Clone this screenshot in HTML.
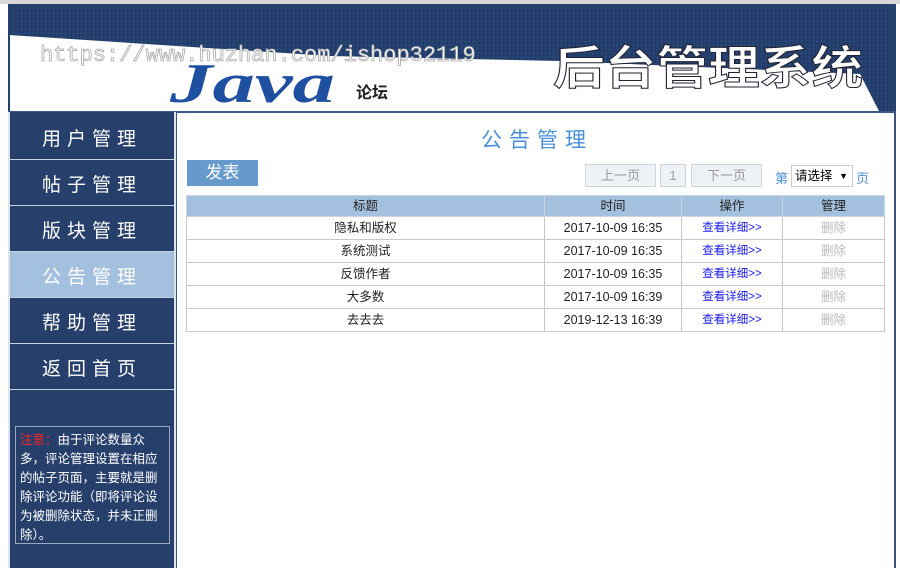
<!DOCTYPE html>
<html><head><meta charset="utf-8"><style>
*{margin:0;padding:0;box-sizing:border-box}
body{width:900px;height:568px;overflow:hidden;background:#fff;font-family:"Liberation Sans","Noto Sans CJK SC",sans-serif;position:relative}
.hdr{position:absolute;left:0;top:0;width:900px;height:113px;border-top:4px solid #d8d8d8}
.side{position:absolute;left:8px;top:112px;width:168px;height:456px;background:#263f6b;border-left:2px solid #dfe4ec;border-right:2px solid #dfe4ec;padding-top:2px}
.mi{height:46px;border-bottom:1px solid #c9d3e0;color:#fff;font-size:19px;letter-spacing:6px;text-align:center;line-height:52px}
.mi.on{background:#a3c0de}
.note{position:absolute;left:5px;top:314px;width:155px;height:118px;border:1px solid #9aa8bd;color:#fff;font-size:12.5px;line-height:19px;padding:4px 4px}
.main{position:absolute;left:176px;top:112px;width:720px;height:456px;border-left:1px solid #3b5585;border-right:2px solid #3b5585;border-top:1px solid #3b5585}
h1{position:absolute;left:0;width:720px;top:11px;text-align:center;font-weight:normal;color:#4a90d9;font-size:21px;letter-spacing:7px}
.pub{position:absolute;left:10px;top:47px;width:71px;height:26px;background:#6699cc;color:#fff;font-size:17px;line-height:26px;text-align:center}
.pb{position:absolute;top:51px;height:23px;border:1px solid #cdd5de;background:#eef2f7;color:#999;font-size:13px;text-align:center;line-height:21px}
table{position:absolute;left:9px;top:82px;width:699px;border-collapse:collapse;font-size:12.5px}
td,th{border:1px solid #c8c8c8;height:23px;text-align:center;font-weight:normal;color:#222;line-height:14px}
th{background:#a3c0de;height:21px;border-color:#c9d5e2}
.l{color:#1a1aee;font-size:11.5px}.d{color:#bbb}
</style></head><body>
<div class="hdr">
<svg width="900" height="109" style="position:absolute;left:0;top:0">
<defs><pattern id="n" width="4" height="4" patternUnits="userSpaceOnUse"><rect width="4" height="4" fill="#24406e"/><rect x="1" y="1" width="1" height="1" fill="#3a5688"/><rect x="3" y="2" width="1" height="1" fill="#1a3058"/></pattern></defs>
<rect x="0" y="0" width="900" height="109" fill="#fff"/>
<rect x="8" y="0" width="888" height="109" fill="url(#n)"/>
<polygon points="9,31 330,52 560,57 860,70 880,109 9,109" fill="#fff"/>
<rect x="8" y="0" width="2" height="109" fill="#24406e"/><rect x="894" y="0" width="2" height="109" fill="#24406e"/>
<rect x="8" y="107" width="888" height="2" fill="#3b5585"/>
<text x="40" y="57" font-family="Liberation Mono,monospace" font-size="22" fill="#fff" stroke="#aaa" stroke-width="0.8">https://www.huzhan.com/ishop32119</text>
<text x="170" y="98" font-family="Liberation Serif,serif" font-style="italic" font-weight="bold" font-size="56" fill="#1f4fa0" textLength="165" lengthAdjust="spacingAndGlyphs">Java</text>
<text x="356" y="94" font-family="Noto Sans CJK SC,sans-serif" font-weight="bold" font-size="16" fill="#222">论坛</text>
<text x="553" y="80" font-family="Noto Sans CJK SC,sans-serif" font-weight="bold" font-size="46" fill="#fff" stroke="#223" stroke-width="1" textLength="310" lengthAdjust="spacingAndGlyphs">后台管理系统</text>
</svg></div>
<div class="side">
<div class="mi">用户管理</div><div class="mi">帖子管理</div><div class="mi">版块管理</div><div class="mi on">公告管理</div><div class="mi">帮助管理</div><div class="mi">返回首页</div>
<div class="note"><span style="color:#f22">注意：</span>由于评论数量众多，评论管理设置在相应的帖子页面，主要就是删除评论功能（即将评论设为被删除状态，并未正删除）。</div>
</div>
<div class="main">
<h1>公告管理</h1>
<div class="pub">发表</div>
<div class="pb" style="left:408px;width:71px">上一页</div>
<div class="pb" style="left:483px;width:26px">1</div>
<div class="pb" style="left:514px;width:71px">下一页</div>
<span style="position:absolute;left:598px;top:55px;color:#4a90d9;font-size:13px">第</span>
<div style="position:absolute;left:614px;top:52px;width:62px;height:22px;border:1px solid #ccc;font-size:12.5px;line-height:20px;padding-left:3px">请选择 <span style="position:absolute;right:4px;font-size:9px">▼</span></div>
<span style="position:absolute;left:679px;top:55px;color:#4a90d9;font-size:13px">页</span>
<table>
<tr><th style="width:358px">标题</th><th style="width:137px">时间</th><th style="width:101px">操作</th><th>管理</th></tr>
<tr><td>隐私和版权</td><td>2017-10-09 16:35</td><td class="l">查看详细&gt;&gt;</td><td class="d">删除</td></tr>
<tr><td>系统测试</td><td>2017-10-09 16:35</td><td class="l">查看详细&gt;&gt;</td><td class="d">删除</td></tr>
<tr><td>反馈作者</td><td>2017-10-09 16:35</td><td class="l">查看详细&gt;&gt;</td><td class="d">删除</td></tr>
<tr><td>大多数</td><td>2017-10-09 16:39</td><td class="l">查看详细&gt;&gt;</td><td class="d">删除</td></tr>
<tr><td>去去去</td><td>2019-12-13 16:39</td><td class="l">查看详细&gt;&gt;</td><td class="d">删除</td></tr>
</table>
</div>
</body></html>
